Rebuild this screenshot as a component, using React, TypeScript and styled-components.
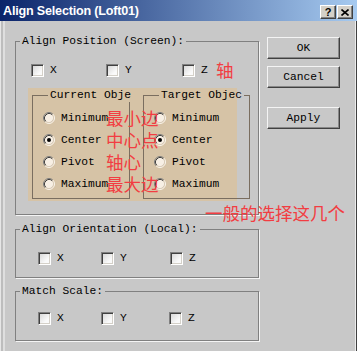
import React from 'react';
import styled, {createGlobalStyle} from 'styled-components';

const mono = `"Liberation Mono", "Courier New", monospace`;
const cjk = `"Noto Sans CJK SC", "Noto Sans", sans-serif`;

const GlobalStyle = createGlobalStyle`
  html, body {
    margin: 0;
    padding: 0;
    background: #c8c8c8;
  }
`;

const Window = styled.div`
  position: relative;
  width: 357px;
  height: 351px;
  background: #c8c8c8;
  overflow: hidden;
  font-family: ${mono};
  font-size: 11.25px;
  color: #000;
`;

const TitleBar = styled.div`
  height: 21px;
  display: flex;
  align-items: center;
  padding: 0 4px 0 3px;
  background: linear-gradient(to right, #0a246a, #a6caf0);
`;

const Title = styled.span`
  flex: 1;
  color: #fff;
  font: bold 12.6px "Liberation Sans", Arial, sans-serif;
  letter-spacing: -0.2px;
`;

const CaptionButton = styled.div`
  width: 16px;
  height: 14px;
  box-sizing: border-box;
  margin-left: 1px;
  align-self: flex-end;
  margin-bottom: 2px;
  display: flex;
  align-items: center;
  justify-content: center;
  background: #d4d0c8;
  border: 1px solid;
  border-color: #fff #404040 #404040 #fff;
  box-shadow: inset -1px -1px #808080;
  font: bold 11px "Liberation Sans", Arial, sans-serif;
`;

const Body = styled.div`
  display: flex;
  height: 330px;
  box-sizing: border-box;
  padding: 13px 0 0 15px;
  box-shadow: inset 1px 0 #e6e6e6, inset 3px 0 #bdbdbd, inset 5px 0 #dedede,
    inset -1px 0 #404040, inset -2px 0 #ececec;
`;

const LeftColumn = styled.div`
  width: 244px;
  display: flex;
  flex-direction: column;
`;

const Group = styled.fieldset<{ $h: number; $top?: number }>`
  margin: ${p => p.$top ?? 0}px 0 0 0;
  padding: 0;
  height: ${p => p.$h}px;
  box-sizing: border-box;
  border: 1px solid #808080;
  box-shadow: 1px 1px 0 #f4f4f4;
  min-width: 0;
`;

const Legend = styled.legend`
  margin-left: 4px;
  padding: 0 2px;
  line-height: 14px;
  white-space: nowrap;
`;

const CheckRow = styled.div<{ $cols: string; $top: number; $left: number }>`
  display: grid;
  grid-template-columns: ${p => p.$cols};
  margin: ${p => p.$top}px 0 0 ${p => p.$left}px;
  height: 14px;
  align-items: center;
`;

const CheckItem = styled.label`
  display: flex;
  align-items: center;
  gap: 6px;
  line-height: 14px;
`;

const Box = styled.span`
  width: 13px;
  height: 13px;
  box-sizing: border-box;
  border: 1px solid;
  border-color: #808080 #fff #fff #808080;
  box-shadow: inset 1px 1px #404040, inset -1px -1px #d4d0c8;
  background: linear-gradient(135deg, #d4d4d4, #fafafa 70%);
`;

const TanRow = styled.div`
  display: flex;
  gap: 13px;
  margin: 11px 0 0 12px;
  padding: 0 0 2px 4px;
  background: linear-gradient(to right, #d6c3a6 0 209px, transparent 209px);
`;

const SubGroup = styled.fieldset<{ $w: number }>`
  margin: 0;
  padding: 5px 0 0 10px;
  width: ${p => p.$w}px;
  height: 111px;
  box-sizing: border-box;
  border: 1px solid #7a6e60;
  min-width: 0;
`;

const SubLegend = styled.legend`
  margin-left: 5px;
  padding: 0 2px;
  line-height: 14px;
  white-space: nowrap;
`;

const RadioItem = styled.div`
  display: flex;
  align-items: center;
  gap: 6px;
  height: 22px;
  white-space: nowrap;
`;

const ButtonColumn = styled.div`
  display: flex;
  flex-direction: column;
  margin: 3px 0 0 8px;
`;

const Button = styled.div<{ $gap?: number }>`
  width: 73px;
  height: 22px;
  box-sizing: border-box;
  margin-top: ${p => p.$gap ?? 0}px;
  display: flex;
  align-items: center;
  justify-content: center;
  background: #c8c8c8;
  border: 1px solid;
  border-color: #f4f4f4 #404040 #404040 #f4f4f4;
  box-shadow: inset -1px -1px #888888;
`;

const Note = styled.div<{ $x: number; $y: number }>`
  position: absolute;
  left: ${p => p.$x}px;
  top: ${p => p.$y}px;
  font-family: ${cjk};
  font-size: 17.5px;
  line-height: 22px;
  color: #f23d42;
  white-space: nowrap;
`;

const Radio = ({checked = false}: { checked?: boolean }) => (
  <svg width="12" height="12" viewBox="0 0 12 12">
    <circle cx="6" cy="6" r="4.5" fill="#f7efe4"/>
    <path d="M2.11 9.89 A5.5 5.5 0 0 1 9.89 2.11" stroke="#808080" fill="none"/>
    <path d="M9.89 2.11 A5.5 5.5 0 0 1 2.11 9.89" stroke="#fbf6ee" fill="none"/>
    <path d="M2.82 9.18 A4.5 4.5 0 0 1 9.18 2.82" stroke="#404040" fill="none"/>
    <path d="M9.18 2.82 A4.5 4.5 0 0 1 2.82 9.18" stroke="#d8cbb8" fill="none"/>
    {checked && <circle cx="6" cy="6" r="2" fill="#000"/>}
  </svg>
);

const Check = ({label}: { label: string }) => (
  <CheckItem>
    <Box/>
    {label}
  </CheckItem>
);

const RadioSet = ({title, width}: { title: string; width: number }) => (
  <SubGroup $w={width}>
    <SubLegend>{title}</SubLegend>
    {['Minimum', 'Center', 'Pivot', 'Maximum'].map(name => (
      <RadioItem key={name}>
        <Radio checked={name === 'Center'}/>
        {name}
      </RadioItem>
    ))}
  </SubGroup>
);

export default function App() {
  return (
    <Window>
      <GlobalStyle/>
      <TitleBar>
        <Title>Align Selection (Loft01)</Title>
        <CaptionButton>?</CaptionButton>
        <CaptionButton>
          <svg width="8" height="7" viewBox="0 0 8 7">
            <path d="M0.5 0.5 L7.5 6.5 M7.5 0.5 L0.5 6.5" stroke="#000" strokeWidth="1.6"/>
          </svg>
        </CaptionButton>
      </TitleBar>
      <Body>
        <LeftColumn>
          <Group $h={181}>
            <Legend>Align Position (Screen):</Legend>
            <CheckRow $cols="75px 76px auto" $top={15} $left={15}>
              <Check label="X"/>
              <Check label="Y"/>
              <Check label="Z"/>
            </CheckRow>
            <TanRow>
              <RadioSet title="Current Obje" width={98}/>
              <RadioSet title="Target Objec" width={107}/>
            </TanRow>
          </Group>
          <Group $h={56} $top={7}>
            <Legend>Align Orientation (Local):</Legend>
            <CheckRow $cols="63px 69px auto" $top={15} $left={22}>
              <Check label="X"/>
              <Check label="Y"/>
              <Check label="Z"/>
            </CheckRow>
          </Group>
          <Group $h={57} $top={6}>
            <Legend>Match Scale:</Legend>
            <CheckRow $cols="63px 68px auto" $top={13} $left={22}>
              <Check label="X"/>
              <Check label="Y"/>
              <Check label="Z"/>
            </CheckRow>
          </Group>
        </LeftColumn>
        <ButtonColumn>
          <Button>OK</Button>
          <Button $gap={7}>Cancel</Button>
          <Button $gap={19}>Apply</Button>
        </ButtonColumn>
      </Body>
      <Note $x={216} $y={59}>轴</Note>
      <Note $x={106} $y={107}>
        最小边<br/>中心点<br/>轴心<br/>最大边
      </Note>
      <Note $x={205} $y={202}>一般的选择这几个</Note>
    </Window>
  );
}
